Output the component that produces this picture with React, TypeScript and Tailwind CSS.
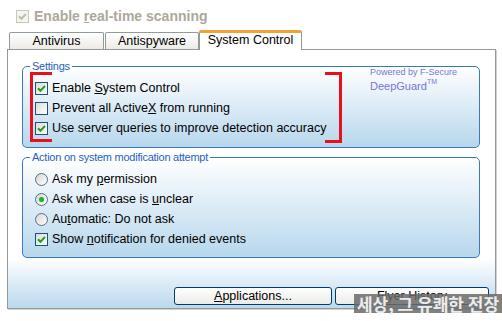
import React from 'react';

const Check = ({ checked, disabled }: { checked: boolean; disabled?: boolean }) => (
  <span
    className={`w-[13px] h-[13px] shrink-0 flex items-center justify-center border ${
      disabled ? 'border-[#cac8bb] bg-[#f5f4ef]' : 'border-[#1c5180] bg-linear-to-br from-[#dcdcd7] to-white'
    }`}
  >
    {checked && (
      <svg width="9" height="9" viewBox="0 0 9 9">
        <path d="M1 4.2 L3.4 6.7 L8 2" fill="none" stroke={disabled ? '#c0bdae' : '#21a121'} strokeWidth="2" />
      </svg>
    )}
  </span>
);

const Radio = ({ on }: { on?: boolean }) => (
  <span className="w-[13px] h-[13px] shrink-0 rounded-full border border-[#4d7092] bg-linear-to-br from-[#d6d6d0] to-white flex items-center justify-center">
    {on && <span className="w-[5px] h-[5px] rounded-full bg-[#28b028] shadow-[0_0_1px_#7fd47f]" />}
  </span>
);

const Row = ({ control, children }: { control: React.ReactNode; children: React.ReactNode }) => (
  <div className="h-[20px] flex items-center gap-[4px] whitespace-nowrap">
    {control}
    <span>{children}</span>
  </div>
);

const Btn = ({ w, children }: { w: string; children: React.ReactNode }) => (
  <button
    className={`${w} h-[18px] border border-[#003c74] rounded-[3px] bg-linear-to-b from-white to-[#ecebe6] text-[12.5px] leading-none text-black`}
  >
    {children}
  </button>
);

export default function App() {
  return (
    <div className="relative w-[502px] h-[321px] overflow-hidden bg-white font-['Liberation_Sans',Arial,sans-serif] text-[12.5px] text-black">
      {/* real-time scanning (disabled) */}
      <div className="h-[30px] flex items-center gap-[5px] pl-[16px] pt-[2px]">
        <Check checked disabled />
        <span className="text-[14px] font-bold text-[#aca899]">
          Enable <span className="underline">r</span>eal-time scanning
        </span>
      </div>

      {/* tabs */}
      <div className="h-[19px] flex items-end pl-[9px]">
        <div className="w-[95px] h-[17px] border border-b-0 border-[#919b9c] rounded-t-[2px] bg-linear-to-b from-white to-[#ecebe6] flex items-center justify-center">
          Antivirus
        </div>
        <div className="ml-[1px] w-[94px] h-[17px] border border-b-0 border-[#919b9c] rounded-t-[2px] bg-linear-to-b from-white to-[#ecebe6] flex items-center justify-center">
          Antispyware
        </div>
        <div className="relative z-10 -mb-px w-[103px] h-[20px] border-x border-[#919b9c] border-t-[3px] border-t-[#f2a234] rounded-t-[2px] bg-white flex items-center justify-center pb-[2px]">
          System Control
        </div>
      </div>

      {/* panel */}
      <div className="ml-[7px] w-[489px] h-[260px] border border-[#919b9c] shadow-[1px_1px_0_#d4d2c6] bg-white flex flex-col">
        <fieldset className="mt-[9px] ml-[14px] w-[458px] h-[89px] border border-[#3a7bbd] rounded-[5px] bg-linear-to-b from-white to-[#b7d7ec]">
          <legend className="ml-[7px] px-[2px] text-[11px] leading-[14px] tracking-[-0.25px] text-[#1f5fbf]">Settings</legend>
          <div className="flex pl-[12px]">
            <div className="flex-1 pt-[5px]">
              <Row control={<Check checked />}>
                Enable <span className="underline">S</span>ystem Control
              </Row>
              <Row control={<Check checked={false} />}>
                Prevent all Active<span className="underline">X</span> from running
              </Row>
              <Row control={<Check checked />}>Use server queries to improve detection accuracy</Row>
            </div>
            <div className="w-[109px] -mt-[5px] text-[#7676d8] leading-none">
              <div className="text-[9px]">Powered by F-Secure</div>
              <div className="mt-[4px] text-[11px]">
                DeepGuard<sup className="text-[7px] align-[3px]">TM</sup>
              </div>
            </div>
          </div>
        </fieldset>

        <fieldset className="mt-[2px] ml-[14px] w-[458px] h-[108px] border border-[#3a7bbd] rounded-[5px] bg-linear-to-b from-white to-[#b7d7ec]">
          <legend className="ml-[7px] px-[2px] text-[11px] leading-[14px] tracking-[-0.25px] text-[#1f5fbf]">
            Action on system modification attempt
          </legend>
          <div className="pl-[12px] pt-[5px]">
            <Row control={<Radio />}>
              Ask my <span className="underline">p</span>ermission
            </Row>
            <Row control={<Radio on />}>
              Ask when case is <span className="underline">u</span>nclear
            </Row>
            <Row control={<Radio />}>
              Au<span className="underline">t</span>omatic: Do not ask
            </Row>
            <Row control={<Check checked />}>
              Show <span className="underline">n</span>otification for denied events
            </Row>
          </div>
        </fieldset>

        <div className="flex-1 flex items-end justify-end gap-[3px] pr-[6px] pb-[3px] bg-linear-to-b from-white to-[#bad8ed]">
          <Btn w="w-[158px]">
            <span className="underline">A</span>pplications...
          </Btn>
          <Btn w="w-[154px]">Flyer History</Btn>
        </div>
      </div>

      {/* red annotation brackets */}
      <div className="absolute left-[30px] top-[72px] w-[22px] h-[70px] border-[3px] border-r-0 border-[#e8101a]" />
      <div className="absolute left-[325px] top-[72px] w-[17px] h-[71px] border-[3px] border-l-0 border-[#e8101a]" />

      {/* watermark */}
      <div className="absolute left-[354px] top-[294px] w-[148px] h-[19px] bg-[#6a6a6a]/85 flex items-center justify-center">
        <span className="font-['Noto_Sans_CJK_KR',sans-serif] font-bold text-[17px] leading-none text-[#ececec] whitespace-nowrap">
          세상, 그 유쾌한 전장
        </span>
      </div>
    </div>
  );
}
